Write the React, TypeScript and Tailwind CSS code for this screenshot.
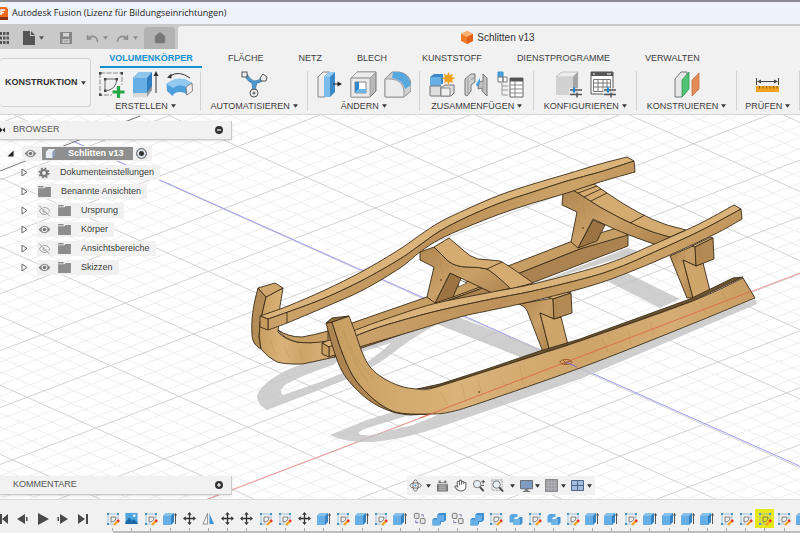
import type { ReactNode } from 'react'
import { EyeOff, Hand, House, Redo, Undo } from 'lucide-react'

function Caret({ className = '' }: { className?: string }) {
  return (
    <svg viewBox="0 0 6 4" className={`w-[5px] h-1 shrink-0 ${className}`} fill="currentColor" aria-hidden="true">
      <path d="M0 0h6L3 4z" />
    </svg>
  )
}

/* ---------- small icons ---------- */

function Cube() {
  return (
    <svg viewBox="0 0 14 14" className="w-[14px] h-[14px]">
      <path d="M0 4l3-3h8v9l-3 3H1q-1 0-1-1z" fill="#3583c4" />
      <path d="M0 4l3-3h8L8 4z" fill="#86c1ec" />
      <path d="M0 4h8v9H1q-1 0-1-1z" fill="#66aee6" />
      <path d="M12.500 12V2M11.500 3.500l1-2 1 2" stroke="#444" strokeWidth=".9" fill="none" />
    </svg>
  )
}

function Sketch() {
  return (
    <svg viewBox="0 0 14 14" className="w-[14px] h-[14px]" fill="none">
      <path d="M2 2h10M2 2v10M12 2v5M2 12h5" stroke="#8db5d2" strokeWidth=".8" />
      <path d="M5 5h5q0 5-5 5z" stroke="#666" strokeWidth=".8" />
      <path d="M1 1h2v2H1zM11 1h2v2h-2zM1 11h2v2H1z" fill="#4a94c8" />
      <path d="M8 13l4-4" stroke="#f0a224" strokeWidth="2.400" />
      <path d="M11.500 9.500l1.500-1.500" stroke="#e0342c" strokeWidth="2.600" />
    </svg>
  )
}

function Move() {
  return (
    <svg viewBox="0 0 14 14" className="w-[13px] h-[13px]" fill="#333">
      <path d="M7 0l2.400 3H4.600zM7 14l2.400-3H4.600zM0 7l3-2.400v4.800zM14 7l-3-2.400v4.800z" />
      <path d="M6.300 2.500h1.400v9H6.300zM2.500 6.300h9v1.400h-9z" />
    </svg>
  )
}

function Mirror() {
  return (
    <svg viewBox="0 0 14 14" className="w-[13px] h-[13px]">
      <path d="M6 1.500V13H1z" fill="#f7f7f7" stroke="#777" strokeWidth=".8" />
      <path d="M8 1.500V13h5z" fill="#3f97d8" />
    </svg>
  )
}

function Picture() {
  return (
    <svg viewBox="0 0 14 14" className="w-[13px] h-[13px]">
      <rect x=".5" y="1" width="13" height="12" fill="#4da4e0" />
      <path d="M.500 11l4-5 3 3.500 2-2 4 4V13H.500z" fill="#1c69a6" />
      <circle cx="10" cy="4" r="1.300" fill="#fff" />
    </svg>
  )
}

function Copies() {
  return (
    <svg viewBox="0 0 14 14" className="w-[13px] h-[13px]" fill="#e3e3e3" stroke="#666" strokeWidth=".9">
      <rect x="1.500" y="1.500" width="5" height="5.500" rx="1" />
      <rect x="8" y="7" width="5" height="5.500" rx="1" />
      <path d="M3 9v2.500h3M9 3h2v2" fill="none" stroke="#55a" />
    </svg>
  )
}

function Combine() {
  return (
    <svg viewBox="0 0 14 14" className="w-[14px] h-[14px]">
      <path d="M5 3l2-2h7v7l-2 2H9v2l-1.500 1.500H.500V7.500L2 6h3z" fill="#3d8fd0" />
      <path d="M5 3h7v6H8v4H.500V7.500H5z" fill="#66aee6" />
    </svg>
  )
}

function Split() {
  return (
    <svg viewBox="0 0 14 14" className="w-[14px] h-[14px]">
      <path d="M.500 4l2-2h6v7l-2 1.500h-6z" fill="#5aa7e2" />
      <path d="M4.500 7l2-2h7v6l-2 2h-7z" fill="#3f93d3" />
      <path d="M4.500 7H11v6H4.500z" fill="#6fb5e8" />
      <path d="M4.500 7l2-2h4L9 7z" fill="#eef6fc" />
    </svg>
  )
}

function Folder() {
  return (
    <svg viewBox="0 0 14 12" className="w-[13px] h-[11px] shrink-0" fill="#8d8d8d">
      <path d="M0 0h6v1.500H0zM0 2.500h7L8 1h6v11H0z" />
    </svg>
  )
}

function Gear() {
  return (
    <svg viewBox="0 0 12 12" className="w-3 h-3 shrink-0" fill="none" stroke="#777">
      <circle cx="6" cy="6" r="3" strokeWidth="2.200" />
      <circle cx="6" cy="6" r="4.700" strokeWidth="1.800" strokeDasharray="1.850 1.840" />
    </svg>
  )
}

function Eye() {
  return (
    <svg viewBox="0 0 14 10" className="w-[13px] h-[9px] shrink-0">
      <path d="M.500 5Q7-3.500 13.500 5 7 13.500.500 5z" fill="#888" />
      <circle cx="7" cy="5" r="3.100" fill="#f0f0f0" />
      <circle cx="7" cy="5" r="1.900" fill="#777" />
    </svg>
  )
}

/* ---------- ribbon icons ---------- */

const ribbonSvg = 'w-[27px] h-[27px]'

function CreateSketchIcon() {
  return (
    <svg viewBox="0 0 27 27" className={ribbonSvg} fill="none">
      <path d="M2 2h22v12M2 2v22h12" stroke="#888" strokeDasharray="5 1.500" />
      <path d="M7 8h12q-1 11-12 12z" stroke="#666" />
      <path d="M1 1h2.500v2.500H1zM22.500 1H25v2.500h-2.500zM1 22.500h2.500V25H1zM6 7h2.500v2.500H6zM17.500 7H20v2.500h-2.500zM6 18.500h2.500V21H6z" fill="#444" />
      <path d="M20.500 15v12M14.500 21h12" stroke="#25a947" strokeWidth="3.200" />
    </svg>
  )
}

function ExtrudeIcon() {
  return (
    <svg viewBox="0 0 27 27" className={ribbonSvg}>
      <path d="M1 25V7l6-6h13v18l-6 7H2z" fill="#2f7dbd" />
      <path d="M1 7l6-6h13l-5 6z" fill="#8fc6ee" />
      <path d="M1 7h14v15H1z" fill="#66aee6" />
      <path d="M1 22h14v4H2q-1 0-1-1z" fill="#d9d9d9" />
      <path d="M15 22l5-7v4l-5 7z" fill="#9c9c9c" />
      <path d="M24 22V4" stroke="#333" />
      <path d="M24 0l2.500 5h-5z" fill="#333" />
    </svg>
  )
}

function RevolveIcon() {
  return (
    <svg viewBox="0 0 27 27" className={ribbonSvg}>
      <path d="M.500 13Q13 3 26 12l.500 8-6 4q-1-3-7-3-5 0-7 4L1 20z" fill="#4f9fdb" />
      <path d="M.500 13Q13 3 26 12l-6 4q-7-4-13 1z" fill="#93c9ef" />
      <path d="M20 16l6-4 .500 8-5.500 4z" fill="#eee" stroke="#777" strokeWidth=".8" />
      <path d="M4 5Q13-1 24 7" fill="none" stroke="#333" />
      <path d="M1 6.500L5.500 2.500v5z" fill="#333" />
    </svg>
  )
}

function AutomateIcon() {
  return (
    <svg viewBox="0 0 27 27" className={ribbonSvg}>
      <path d="M3 4q4 7 8 8 1 5 0 9h4q-1-5 1-9 4 0 7-4l-2-2q-3 4-7.500 4Q9 9 6 3z" fill="#4c9ad0" stroke="#38719c" strokeWidth=".7" />
      <rect x="1" y="1" width="5" height="5" fill="#eee" stroke="#555" />
      <path d="M19 7l3-4 4 3-1 4h-5z" fill="#eee" stroke="#555" />
      <circle cx="13" cy="22" r="4" fill="#eee" stroke="#555" />
      <circle cx="13" cy="22" r="1.600" fill="#777" />
    </svg>
  )
}

function PressPullIcon() {
  return (
    <svg viewBox="0 0 27 27" className={ribbonSvg}>
      <path d="M2 6l5-5h7v20l-5 5H2z" fill="#ececec" stroke="#888" />
      <path d="M8 6l5-5h6v20l-5 5H8z" fill="#3a88c6" />
      <path d="M8 6h6v20H8z" fill="#7bbcec" />
      <path d="M8 6l5-5h6l-5 5z" fill="#94cbf2" />
      <path d="M17 13h5" stroke="#222" />
      <path d="M26 13l-4.500-2.500v5z" fill="#222" />
    </svg>
  )
}

function ShellIcon() {
  return (
    <svg viewBox="0 0 27 27" className={ribbonSvg}>
      <path d="M1 7l6-6h19v19l-6 6H1z" fill="#b8b8b8" stroke="#777" />
      <path d="M1 7h19v19H1zM1 7l6-6h19l-6 6z" fill="#ebebeb" stroke="#999" strokeWidth=".8" />
      <path d="M5 11h11v11H5z" fill="#fff" stroke="#888" />
      <path d="M5 11h4v7l-4 4z" fill="#2f86c8" />
      <path d="M5 22l4-4h7v4z" fill="#6db5e8" />
    </svg>
  )
}

function FilletIcon() {
  return (
    <svg viewBox="0 0 27 27" className={ribbonSvg}>
      <path d="M1 8l7-7h7q11 2 12 12v7l-7 6H1z" fill="#cfcfcf" stroke="#888" />
      <path d="M9 1h6q10 2 12 13l-6 4Q19 9 8 7z" fill="#58a8e0" />
      <path d="M1 8h6q12 1 13 12v6H1z" fill="#ececec" stroke="#999" />
    </svg>
  )
}

function NewComponentIcon() {
  return (
    <svg viewBox="0 0 27 27" className={ribbonSvg}>
      <path d="M1 6l4-3h9v10H1z" fill="#3b89c6" />
      <path d="M1 6h11v9H1z" fill="#67b0e6" />
      <path d="M1 15h11v10H2q-1 0-1-1zM12 17l4-3h9v8l-3 3H12z" fill="#ddd" stroke="#777" />
      <path d="M12 17h9v8h-9z" fill="#efefef" stroke="#888" />
      <path d="M19.500 1l1.300 3.300 3.300-1.600-1.200 3.400 3.600 1.200-3.500 1.400 1.200 3.400-3.400-1.400-1.300 3.300-1.400-3.300-3.300 1.400 1.200-3.400-3.500-1.400 3.500-1.200-1.200-3.400 3.300 1.600z" fill="#f2a01f" />
    </svg>
  )
}

function JointIcon() {
  return (
    <svg viewBox="0 0 27 27" className={ribbonSvg}>
      <path d="M2 8l6-5h4v8l-4 3v6l-4 5-2-1z" fill="#cfcfcf" stroke="#777" />
      <path d="M5 7v16M8 9l4-3" fill="none" stroke="#999" />
      <path d="M16 11l4-1V3l4 4v18l-5-5v-3l-4 1z" fill="#c2c2c2" stroke="#777" />
      <path d="M20 10v10" stroke="#999" />
      <path d="M13 13l4-6v5l-3 4z" fill="#4ba0dc" />
    </svg>
  )
}

function TableIcon() {
  return (
    <svg viewBox="0 0 27 27" className={ribbonSvg}>
      <path d="M1 1h5v5H1z" fill="#4ba0dc" stroke="#39c" />
      <path d="M1 6h5v5H1zM6 6h4v5H6z" fill="#fff" stroke="#777" />
      <path d="M5 12v12M5 15h6M5 19h6M5 24h6" stroke="#999" fill="none" />
      <path d="M13 7h13v19H13z" fill="#fff" stroke="#666" />
      <path d="M13 7h13v3.500H13z" fill="#555" />
      <path d="M13 14h13M13 18h13M13 22h13M18 10v16" stroke="#888" />
    </svg>
  )
}

function Sliders() {
  return (
    <>
      <path d="M14 17h13v9H14z" fill="#f0f0f0" opacity=".7" />
      <path d="M15 19h12M15 23.500h12" stroke="#555" strokeWidth="1.400" />
      <path d="M19 16.500v5" stroke="#1388dc" strokeWidth="2" />
      <path d="M22 21.500v5" stroke="#555" strokeWidth="1.500" />
    </>
  )
}

function ConfigureIcon() {
  return (
    <svg viewBox="0 0 27 27" className={ribbonSvg}>
      <path d="M1 6l6-5h16v19l-5 4H2q-1 0-1-1z" fill="#a4a4a4" />
      <path d="M1 6l6-5h16l-5 5z" fill="#ededed" stroke="#aaa" strokeWidth=".6" />
      <path d="M1 6h17v18H2q-1 0-1-1z" fill="#d2d2d2" />
      <Sliders />
    </svg>
  )
}

function ConfigureTableIcon() {
  return (
    <svg viewBox="0 0 27 27" className={ribbonSvg}>
      <path d="M2 1h22v22H2z" fill="#fff" stroke="#555" />
      <path d="M2 1h22v4H2z" fill="#555" />
      <path d="M4 3h2M18 3h4" stroke="#fff" />
      <path d="M4.500 8.500h17v12h-17zM4.500 12h17M4.500 16h17M9 8.500v12M14 8.500v12M18 8.500v12" fill="none" stroke="#777" />
      <Sliders />
    </svg>
  )
}

function PlaneIcon() {
  return (
    <svg viewBox="0 0 27 27" className={ribbonSvg}>
      <path d="M2 8l6-7h6v19l-5 6H2z" fill="#e6e6e6" stroke="#777" />
      <path d="M9 9l7-8v17l-7 8z" fill="#4fc274" stroke="#2f9a52" strokeWidth=".8" />
      <path d="M19 9l7-7v16l-7 7z" fill="#e58b58" stroke="#c96e3d" strokeWidth=".8" />
    </svg>
  )
}

function MeasureIcon() {
  return (
    <svg viewBox="0 0 27 27" className={ribbonSvg}>
      <path d="M2.500 7v7M24.500 7v7M4 10.500h19" stroke="#444" />
      <path d="M3 10.500l4-2v4zM24 10.500l-4-2v4z" fill="#444" />
      <path d="M2 15h23v6H2z" fill="#f2a01f" />
      <path d="M5.500 15v2.500M9 15v2.500M12.500 15v2.500M16 15v2.500M19.500 15v2.500M23 15v2.500" stroke="#8a5a10" />
    </svg>
  )
}

/* ---------- canvas ---------- */

type Pt = [number, number]

// one major grid cell, projected: u runs up-right, v runs down-right
const at = (a: number, b: number): Pt => [375 + 83.3 * a + 68.6 * b, 208 - 31.7 * a + 30.8 * b]

function gridPath(major: boolean) {
  let d = ''
  for (let i = -60; i <= 60; i++) {
    if ((i % 5 === 0) !== major) continue
    const [x1, y1] = at(-14, i / 5)
    const [x2, y2] = at(14, i / 5)
    const [x3, y3] = at(i / 5, -14)
    const [x4, y4] = at(i / 5, 14)
    d += `M${x1} ${y1}L${x2} ${y2}M${x3} ${y3}L${x4} ${y4}`
  }
  return d
}

// smooth curve through the points (Catmull-Rom turned into beziers)
function through(pts: Pt[]) {
  let d = ''
  for (let i = 0; i < pts.length - 1; i++) {
    const p0 = pts[i - 1] ?? pts[i]
    const p1 = pts[i]
    const p2 = pts[i + 1]
    const p3 = pts[i + 2] ?? p2
    d += `C${p1[0] + (p2[0] - p0[0]) / 6} ${p1[1] + (p2[1] - p0[1]) / 6} ${p2[0] - (p3[0] - p1[0]) / 6} ${p2[1] - (p3[1] - p1[1]) / 6} ${p2[0]} ${p2[1]}`
  }
  return d
}

// closed face between two curves that run the same way
function face(a: Pt[], b: Pt[]) {
  const back = [...b].reverse()
  return `M${a[0][0]} ${a[0][1]}${through(a)}L${back[0][0]} ${back[0][1]}${through(back)}Z`
}

const farRail: Record<string, Pt[]> = {
  top: [[260, 316], [288, 306], [325, 290], [363, 271], [400, 249], [420, 235], [440, 222], [467, 209], [500, 195], [533, 184], [567, 174], [600, 164], [627, 157]],
  mid: [[268, 319], [288, 312], [325, 298], [363, 280], [400, 259], [420, 245], [440, 231], [467, 217], [500, 203], [533, 192], [567, 181], [600, 172], [634, 161]],
  low: [[268, 330], [287, 323], [325, 307], [363, 290], [400, 268], [420, 252], [440, 239], [467, 227], [500, 214], [533, 203], [567, 193], [600, 182], [635, 172]],
}

const nearRail: Record<string, Pt[]> = {
  top: [[322, 343], [353, 331], [383, 320], [433, 304], [487, 293], [533, 284], [590, 269], [620, 259], [650, 246], [697, 225], [734, 205]],
  mid: [[329, 347], [353, 337], [383, 326], [433, 312], [487, 300], [533, 291], [590, 277], [620, 267], [650, 254], [700, 231], [741, 209]],
  low: [[329, 357], [353, 349], [383, 340], [410, 332], [460, 317], [487, 311], [533, 301], [590, 286], [627, 273], [670, 255], [717, 233], [742, 219]],
}

const nearRunner: Record<string, Pt[]> = {
  outer: [[326, 323], [333, 348], [342, 371], [355, 388], [373, 403], [393, 412], [410, 415]],
  ridge: [[332, 322], [342, 352], [353, 376], [367, 393], [383, 406], [400, 413], [430, 414], [450, 412], [483, 402], [580, 368], [677, 330], [755, 298]],
  inner: [[349, 316], [355, 332], [362, 352], [370, 367], [383, 378], [400, 386], [417, 389], [433, 388], [487, 371], [540, 354], [580, 341], [690, 302], [743, 278]],
}

function Canvas() {
  return (
    <svg
      viewBox="0 115 800 384"
      preserveAspectRatio="xMidYMid slice"
      className="absolute inset-0 w-full h-full"
      role="img"
      aria-label="Schlitten v13"
    >
      <defs>
        <linearGradient id="side" x1="0" y1="0" x2="1" y2=".3">
          <stop offset="0" stopColor="#c0965c" />
          <stop offset=".3" stopColor="#cba26a" />
          <stop offset=".55" stopColor="#bc925a" />
          <stop offset=".8" stopColor="#cba268" />
          <stop offset="1" stopColor="#bc9058" />
        </linearGradient>
        <linearGradient id="runner" x1="0" y1="0" x2="1" y2="0">
          <stop offset="0" stopColor="#c79e62" />
          <stop offset=".12" stopColor="#d0a76b" />
          <stop offset=".3" stopColor="#dab37a" />
          <stop offset=".6" stopColor="#cda46a" />
          <stop offset=".8" stopColor="#d5ad74" />
          <stop offset="1" stopColor="#c69c62" />
        </linearGradient>
        <linearGradient id="leg" x1="0" y1="0" x2="1" y2="1">
          <stop offset="0" stopColor="#b08750" />
          <stop offset=".5" stopColor="#c9a068" />
          <stop offset="1" stopColor="#a97f4a" />
        </linearGradient>
      </defs>

      <path d={gridPath(false)} stroke="#efefef" fill="none" />
      <path d={gridPath(true)} stroke="#d2d2d2" fill="none" />
      <path d="M0 171L140 116" stroke="#777" />
      <path d="M75 142L880 502" stroke="#9292ee" strokeWidth=".9" />
      <path d="M200 502L800 273" stroke="#f09a9a" />

      {/* ground shadows */}
      <g fill="#c4c4c4" opacity=".8">
        <path d="M257 396Q259 388 273 378 285 370 297 366L325 356 345 356 333 365Q300 376 285 385 278 391 283 395L323 381 350 370 367 362Q388 348 400 333L440 322Q420 334 403 345 385 360 370 368L345 380 267 410Q257 404 257 396z" />
        <path d="M359 347L383 339 410 333 440 324 400 340 362 352z" />
        <path d="M330 435L367 420 393 412 410 415 367 428Q357 432 359 434 365 437 380 433L413 425 440 414 580 368 755 299 757 304 580 379 440 427Q405 439 373 442 345 443 330 435z" />
        <path d="M434 323L458 317 546 351 530 361z" />
        <path d="M607 281L627 273 680 299 660 308z" />
        <path d="M532 285L628 248 640 252 600 264z" />
      </g>

      <g stroke="#3b2c18" strokeWidth=".9" strokeLinejoin="round">
        {/* far runner */}
        <path d="M325 332L352 323 427 297 508 266 570 242 620 227 628 236 580 249 480 289 355 334 322 343z" fill="#c69d62" />
        <path d="M322 343L355 334 480 289 580 249 628 235 628 246 532 283 400 335 335 357z" fill="#ab8350" />
        <path d="M258 288C253 306 251 320 252 334 252 341 255 346 261 349L259 337 260 323 266 297z" fill="#b48c56" />
        <path d="M266 297L283 288 280 306 278 332Q284 339 297 342 310 344 324 341L335 357 312 362Q302 365 293 364 284 364 277 362 267 357 261 349 258 336 260 323z" fill="url(#runner)" />
        <path d="M278 330Q288 337 302 337 314 335 328 331V341Q310 344 297 342 284 339 278 330z" fill="#c79e64" />
        <path d="M258 288L275 283 283 288 266 297z" fill="#d0a86e" />

        {/* rear crossbar with its far leg */}
        <path d="M593 220L605 225 597 241 578 248z" fill="#9c7444" />
        <path d="M563 193L573 190 600 207Q625 222 650 231L670 237 657 245Q630 236 610 227L593 219 578 248 571 242 577 212 562 205z" fill="url(#leg)" />
        <path d="M573 190L594 184 607 193Q640 216 667 225L686 230 670 237Q640 230 600 207z" fill="#d4ab70" />
        <path d="M591 201L607 193M584 197L601 189M578 193L597 186M630 223L645 215" fill="none" />

        {/* front crossbar with its far leg */}
        <path d="M450 273L461 278 453 297 435 303z" fill="#9c7444" />
        <path d="M460 280L467 283 458 287z" fill="#fff" strokeWidth=".6" />
        <path d="M453 297L480 287" />
        <path d="M420 252L434 247 448 261Q456 267 467 267 480 267 487 269 493 272 511 288L492 293 480 287 450 273 435 303 427 297 434 267 420 260z" fill="url(#leg)" />
        <path d="M434 247L449 238 463 250Q470 257 478 259 490 260 500 261 507 264 533 283L511 289Q493 272 487 269 480 267 467 267 456 267 448 261z" fill="#d4ab70" />
        <path d="M487 269L502 262" />

        {/* far seat rail */}
        <path d={face(farRail.top, farRail.mid)} fill="#dab37a" />
        <path d={face(farRail.mid, farRail.low)} fill="url(#side)" />
        <path d="M260 316L268 319 268 330 260 327z" fill="#c59b60" />
        <path d="M287 312V323" />

        {/* near legs */}
        <path d="M519 304L553 298 554 319 540 313 550 352 543 352 528 313Q526 307 519 304z" fill="url(#leg)" />
        <path d="M540 313L554 319 561 317 568 345 550 352z" fill="#cea56a" />
        <path d="M545 296L568 292 571 293 553 299z" fill="#d8b078" />
        <path d="M553 299L571 293 572 313 554 319z" fill="#b38a54" />
        <path d="M670 256L695 245 696 266 683 260 693 298 687 298z" fill="url(#leg)" />
        <path d="M683 260L696 266 703 263 710 291 693 298z" fill="#cea56a" />
        <path d="M692 246L711 237 713 238 695 247z" fill="#d8b078" />
        <path d="M695 247L713 238 714 259 696 266z" fill="#b38a54" />

        {/* near seat rail */}
        <path d={face(nearRail.top, nearRail.mid)} fill="#dab37a" />
        <path d={face(nearRail.mid, nearRail.low)} fill="url(#side)" />
        <path d="M322 343L329 347 329 357 322 354z" fill="#c59b60" />

        {/* near runner */}
        <path d={face(nearRunner.outer, nearRunner.ridge.slice(0, 7))} fill="#ae8450" />
        <path d="M417 389L440 384 487 369 540 351 580 339 690 299 733 278 743 277 690 302 580 341 487 371 433 388z" fill="#6e5430" />
        <path d={face(nearRunner.inner, nearRunner.ridge)} fill="url(#runner)" />
        <path d="M326 323L332 318 349 316 332 322z" fill="#8f6b3c" />
      </g>

      {/* wood grain */}
      <g stroke="#a87a42" strokeWidth=".6" opacity=".4" fill="none">
        <path d="M343 330Q352 362 368 382M350 345Q356 362 374 378M440 392L448 405M462 384L466 402M478 380L482 394M500 376L506 388M520 366L523 384M602 338L608 352M628 330L631 346M650 322L654 336M700 302L706 314M722 292L728 304" />
        <path d="M270 340L276 356M284 346L290 358M300 348L302 360M440 234L450 231M500 208L520 201M380 279L388 275M440 314L450 311M500 302L516 299M620 270L628 267M556 304L558 314M700 247L702 260M583 205L586 220M440 262L444 278" />
      </g>
      <g fill="#6f4c22">
        <circle cx="479" cy="392" r=".9" />
        <circle cx="583" cy="228" r=".9" />
        <circle cx="441" cy="280" r=".9" />
      </g>

      <path d="M420 418L752 291" stroke="#e0694a" strokeWidth=".9" />
      <g fill="none" stroke="#a0562e">
        <ellipse cx="566" cy="362" rx="6" ry="2.500" />
        <path d="M563 360L568 365M562 364L571 361" />
      </g>
      <path d="M566 362L577 367" stroke="#7a6ad0" />
    </svg>
  )
}

/* ---------- panels ---------- */

function QuickBar() {
  return (
    <div className="w-[178px] bg-[#c9c9c9] flex items-end text-[#6f6f6f]">
      <div className="flex items-center h-[22px] flex-1 gap-1">
        <button aria-label="Daten" className="w-[9px] overflow-hidden">
          <svg viewBox="0 0 9 12" className="w-[9px] h-3" fill="#555">
            <path d="M0 0h2v3H0zM3 0h2.500v3H3zM6.500 0H9v3H6.500zM0 4.500h2v3H0zM3 4.500h2.500v3H3zM6.500 4.500H9v3H6.500zM0 9h2v3H0zM3 9h2.500v3H3zM6.500 9H9v3H6.500z" />
          </svg>
        </button>
        <button aria-label="Datei" className="flex items-center gap-1 ml-[10px] text-[#555]">
          <svg viewBox="0 0 12 14" className="w-3 h-[14px]" fill="currentColor">
            <path d="M0 0h7v5h5v9H0zM8 0l4 4H8z" />
          </svg>
          <Caret />
        </button>
        <button aria-label="Speichern" className="ml-3 text-[#868686]">
          <svg viewBox="0 0 12 12" className="w-3 h-3">
            <path d="M0 0h12v12H0z" fill="currentColor" />
            <path d="M3 1h6v3.500H3zM2.500 7h7v4h-7z" fill="#d4d4d4" />
            <path d="M3.500 8.300h5M3.500 9.800h5" stroke="currentColor" strokeWidth=".7" />
          </svg>
        </button>
        <button aria-label="Rückgängig" className="flex items-center gap-1 ml-[10px] text-[#8a8a8a]">
          <Undo className="w-[13px] h-[13px]" strokeWidth={3} />
          <Caret />
        </button>
        <button aria-label="Wiederholen" className="flex items-center gap-1 ml-1 text-[#8a8a8a]">
          <Redo className="w-[13px] h-[13px]" strokeWidth={3} />
          <Caret />
        </button>
      </div>
      <button aria-label="Start" className="w-[31px] h-[22px] mr-[3px] rounded-t bg-[#b2b2b2] flex items-center justify-center">
        <House className="w-3 h-3 text-[#777] fill-[#777]" strokeWidth={2.5} />
      </button>
    </div>
  )
}

function Group({ label, className, children }: { label: string; className: string; children: ReactNode }) {
  return (
    <div className={`min-w-0 border-r border-[#d3d3d3] h-10 flex flex-col items-center justify-between ${className}`}>
      <div className="flex gap-[7px] h-[27px]">{children}</div>
      <button className="flex items-center gap-[3px] leading-[10px] whitespace-nowrap">
        {label}
        <Caret />
      </button>
    </div>
  )
}

function IconButton({ label, children }: { label: string; children: ReactNode }) {
  return <button aria-label={label}>{children}</button>
}

const tabs = ['FLÄCHE', 'NETZ', 'BLECH', 'KUNSTSTOFF', 'DIENSTPROGRAMME', 'VERWALTEN']

function Ribbon() {
  return (
    <div className="h-[66px] bg-[#f1f1f1] border-b border-[#d6d6d6] flex text-[9px] text-[#3d3d3d]">
      <div className="relative w-[91px] h-[49px] mt-[9px] shrink-0">
        <select
          aria-label="Arbeitsbereich"
          className="appearance-none w-full h-full rounded border border-l-0 border-[#d2d2d2] bg-[#f4f4f4] pl-[5px] font-bold text-[#333]"
        >
          <option>KONSTRUKTION</option>
        </select>
        <Caret className="absolute right-[5px] top-[23px] pointer-events-none" />
      </div>
      <div className="flex-1 min-w-0">
        <nav className="flex h-[19px] items-stretch gap-[35px] pl-[9px] whitespace-nowrap">
          <a href="#volumen" className="w-[102px] -mr-[9px] shrink-0 text-center font-bold leading-[18px] text-[#1690d2] border-b-2 border-[#1690d2]">
            VOLUMENKÖRPER
          </a>
          {tabs.map((t) => (
            <a key={t} href={`#${t.toLowerCase()}`} className="leading-[18px]">
              {t}
            </a>
          ))}
        </nav>
        <div className="flex pt-[3px]">
          <Group label="ERSTELLEN" className="flex-[110]">
            <IconButton label="Skizze erstellen"><CreateSketchIcon /></IconButton>
            <IconButton label="Extrusion"><ExtrudeIcon /></IconButton>
            <IconButton label="Drehen"><RevolveIcon /></IconButton>
          </Group>
          <Group label="AUTOMATISIEREN" className="flex-[107]">
            <IconButton label="Automatisierte Modellierung"><AutomateIcon /></IconButton>
          </Group>
          <Group label="ÄNDERN" className="flex-[112]">
            <IconButton label="Drücken/Ziehen"><PressPullIcon /></IconButton>
            <IconButton label="Schale"><ShellIcon /></IconButton>
            <IconButton label="Abrundung"><FilletIcon /></IconButton>
          </Group>
          <Group label="ZUSAMMENFÜGEN" className="flex-[114]">
            <IconButton label="Neue Komponente"><NewComponentIcon /></IconButton>
            <IconButton label="Verbindung"><JointIcon /></IconButton>
            <IconButton label="Stückliste"><TableIcon /></IconButton>
          </Group>
          <Group label="KONFIGURIEREN" className="flex-[103]">
            <IconButton label="Konfiguration"><ConfigureIcon /></IconButton>
            <IconButton label="Konfigurationstabelle"><ConfigureTableIcon /></IconButton>
          </Group>
          <Group label="KONSTRUIEREN" className="flex-[99]">
            <IconButton label="Versatzebene"><PlaneIcon /></IconButton>
          </Group>
          <Group label="PRÜFEN" className="flex-[63]">
            <IconButton label="Messen"><MeasureIcon /></IconButton>
          </Group>
        </div>
      </div>
    </div>
  )
}

const rows = [
  { label: 'Dokumenteinstellungen', icon: 'gear' },
  { label: 'Benannte Ansichten', icon: 'folder' },
  { label: 'Ursprung', icon: 'hidden' },
  { label: 'Körper', icon: 'shown' },
  { label: 'Ansichtsbereiche', icon: 'hidden' },
  { label: 'Skizzen', icon: 'shown' },
]

function Tree() {
  return (
    <ul className="mt-1 text-[9px] text-[#3c3c3c]">
      <li className="flex items-center h-[19px] pl-[7px]">
        <button aria-label="Zuklappen" className="w-[15px]">
          <svg viewBox="0 0 8 8" className="w-[7px] h-[7px]">
            <path d="M7.500.500v7h-7z" fill="#222" />
          </svg>
        </button>
        <div className="flex items-center h-[15px] bg-[#f1f1f1] pl-[2px] pr-[5px]">
          <button aria-label="Sichtbarkeit">
            <Eye />
          </button>
          <div className="flex items-center w-[91px] h-[13px] ml-[5px] bg-[#8f8f8f] text-white font-bold">
            <svg viewBox="0 0 12 12" className="w-[11px] h-[11px] ml-[3px] mr-3">
              <path d="M1 4l3-3h7v7l-3 3H1z" fill="#8fa0b8" />
              <path d="M1 4h7v7H1zM1 4l3-3h7L8 4z" fill="#e8edf5" />
            </svg>
            Schlitten v13
          </div>
          <input
            type="radio"
            name="active"
            defaultChecked
            aria-label="Schlitten v13 aktivieren"
            className="appearance-none w-[11px] h-[11px] ml-[3px] rounded-full border border-[#777] bg-[#333] shadow-[inset_0_0_0_2px_#dce4ee]"
          />
        </div>
      </li>
      {rows.map((r) => (
        <li key={r.label} className="flex items-center h-[19px] pl-[21px]">
          <button aria-label={`${r.label} aufklappen`} className="w-4">
            <svg viewBox="0 0 7 9" className="w-[7px] h-[9px]">
              <path d="M1 1l5 3.500L1 8z" fill="#fff" stroke="#666" />
            </svg>
          </button>
          <div className="flex items-center h-[15px] bg-[#f1f1f1] pl-px">
            {r.icon === 'gear' && <Gear />}
            {r.icon === 'folder' && <Folder />}
            {(r.icon === 'hidden' || r.icon === 'shown') && (
              <>
                <button aria-label={`${r.label} Sichtbarkeit`} className="mr-[7px]">
                  {r.icon === 'shown' ? <Eye /> : <EyeOff className="w-[13px] h-3 text-[#8d8d8d]" strokeWidth={1.6} />}
                </button>
                <Folder />
              </>
            )}
            <span className="pl-[10px] pr-[6px]">{r.label}</span>
          </div>
        </li>
      ))}
    </ul>
  )
}

function PanelBar({ title, sign, children }: { title: string; sign: string; children?: ReactNode }) {
  return (
    <div className="flex items-center w-[232px] h-[19px] bg-[#f1f1f1] border-b border-r border-[#cacaca] shadow-sm text-[9px] text-[#555]">
      <span className="w-[13px]">{children}</span>
      <span className="flex-1">{title}</span>
      <button aria-label={title} className="mr-2">
        <svg viewBox="0 0 8 8" className="w-2 h-2">
          <circle cx="4" cy="4" r="4" fill="#333" />
          <path d={sign} stroke="#fff" strokeWidth="1.200" />
        </svg>
      </button>
    </div>
  )
}

function NavBar() {
  return (
    <div className="flex items-center justify-between w-[188px] h-[19px] pl-[2px] pr-[3px] bg-[#f1f1f1] text-[#333]">
      <button aria-label="Orbit" className="flex items-center gap-1">
        <svg viewBox="0 0 14 14" className="w-[13px] h-[13px]" fill="none" stroke="#666">
          <ellipse cx="7" cy="7" rx="6" ry="2.800" />
          <ellipse cx="7" cy="7" rx="2.800" ry="6" />
          <circle cx="7" cy="7" r="1" fill="#3a8fd0" stroke="none" />
        </svg>
        <Caret />
      </button>
      <button aria-label="Ansicht">
        <svg viewBox="0 0 14 12" className="w-[13px] h-3" fill="#777">
          <path d="M3 0h2v2h4V0h2v2l2 1H1l2-1zM1 4h12v8H1z" />
          <path d="M3 6h8M3 8h8M3 10h8" stroke="#ddd" strokeWidth=".8" />
        </svg>
      </button>
      <button aria-label="Pan">
        <Hand className="w-[13px] h-[13px] text-[#666] fill-white" strokeWidth={2} />
      </button>
      <button aria-label="Zoom">
        <svg viewBox="0 0 14 14" className="w-[13px] h-[13px]" fill="none">
          <circle cx="5.500" cy="5.500" r="4" fill="#e4eef4" stroke="#777" />
          <path d="M8.500 8.500l4 4.500" stroke="#444" strokeWidth="2" />
          <path d="M10 3h4M12 1v4M10 7h3" stroke="#444" />
        </svg>
      </button>
      <button aria-label="Zoomfenster" className="flex items-center gap-[6px]">
        <svg viewBox="0 0 14 14" className="w-[13px] h-[13px]" fill="none">
          <path d="M1 1h11v11H1z" stroke="#999" strokeDasharray="2 1" />
          <circle cx="6" cy="6" r="4" fill="#e4eef4" stroke="#777" />
          <path d="M9 9l4 4.500" stroke="#444" strokeWidth="2" />
        </svg>
        <Caret />
      </button>
      <button aria-label="Anzeige" className="flex items-center gap-[2px]">
        <svg viewBox="0 0 14 13" className="w-[13px] h-3">
          <path d="M.500.500h13v9H.500z" fill="#7c9cc4" stroke="#666" />
          <path d="M5 10h4v2h2v1H3v-1h2z" fill="#777" />
        </svg>
        <Caret />
      </button>
      <button aria-label="Raster" className="flex items-center gap-[3px]">
        <svg viewBox="0 0 13 13" className="w-[13px] h-[13px]">
          <path d="M.500.500h12v12H.500z" fill="#9c9ca2" stroke="#8a8a8a" />
          <path d="M3.500 1v11M6.500 1v11M9.500 1v11M1 3.500h11M1 6.500h11M1 9.500h11" stroke="#b9b9c0" strokeWidth=".6" />
        </svg>
        <Caret />
      </button>
      <button aria-label="Ansichtsfenster" className="flex items-center gap-[3px]">
        <svg viewBox="0 0 13 11" className="w-[13px] h-[11px]">
          <path d="M.500.500h12v10H.500z" fill="#a3bbdd" stroke="#4f6688" />
          <path d="M6.500 0v11M0 5.500h13" stroke="#4f6688" />
        </svg>
        <Caret />
      </button>
    </div>
  )
}

const features: Record<string, [string, () => ReactNode]> = {
  s: ['Skizze', () => <Sketch />],
  i: ['Bild', () => <Picture />],
  e: ['Extrusion', () => <Cube />],
  m: ['Verschieben', () => <Move />],
  r: ['Spiegeln', () => <Mirror />],
  c: ['Kopie', () => <Copies />],
  k: ['Kombinieren', () => <Combine />],
  t: ['Trennen', () => <Split />],
}
const timeline = 'sisemrmmssmeseseckckststseeseeeesssse'.split('')
const active = 34

function Timeline() {
  return (
    <footer className="h-[34px] flex overflow-hidden bg-[#f1f1f1] border-t border-[#dcdcdc]">
      <div className="flex items-center w-[103px] h-[38px] shrink-0 gap-[7px] text-[#4a4a4a]">
        {[
          ['Anfang', 'M0 1h2v10H0zM8 1v10L2 6z'],
          ['Zurück', 'M8 1v10L0 6zM9 4h1.500v4H9z'],
          ['Wiedergabe', 'M1 0v12l11-6z'],
          ['Vor', 'M3 1v10l8-5zM.500 4H2v4H.500z'],
          ['Ende', 'M1 1v10l7-5zM9 1h2v10H9z'],
        ].map(([label, d]) => (
          <button key={label} aria-label={label} className="first:w-[10px] w-[13px] overflow-hidden">
            <svg viewBox="0 0 13 12" className="w-[13px] h-3" fill="currentColor">
              <path d={d} />
            </svg>
          </button>
        ))}
      </div>
      <ol className="flex flex-1 -mr-[13px] pt-[9px]">
        {timeline.map((k, i) => (
          <li key={i} className="flex-1 flex flex-col items-center">
            <button
              aria-label={features[k][0]}
              className={`w-[19px] h-[19px] flex items-center justify-center ${i === active ? 'bg-[#e6e81c]' : ''}`}
            >
              {features[k][1]()}
            </button>
            <span className="w-px h-[3px] bg-[#aaa]" />
            <span className={`h-[2px] bg-[#bdbdbd] ${i === 0 ? 'w-1/2 self-end' : 'w-full'}`} />
          </li>
        ))}
      </ol>
    </footer>
  )
}

export default function App() {
  return (
    <div className="h-screen flex flex-col overflow-hidden bg-white font-['Liberation_Sans',Arial,sans-serif]">
      <header className="h-6 shrink-0 flex items-center gap-1 border-t-2 border-[#8b8b95] bg-[#eef2fa]">
        <svg viewBox="0 0 8 13" className="w-2 h-[13px]">
          <path d="M0 0h6l2 2v11H0z" fill="#f0681c" />
          <path d="M0 10h8v3H0z" fill="#8a3210" />
          <path d="M1 8V3h4M1 5.500h3" stroke="#fff" strokeWidth="1.400" fill="none" />
        </svg>
        <h1 className="text-[9px] text-[#222] font-['Open_Sans',sans-serif]">Autodesk Fusion (Lizenz für Bildungseinrichtungen)</h1>
      </header>
      <div className="h-[25px] shrink-0 flex border-t-2 border-[#c9c9c9] bg-[#c9c9c9]">
        <QuickBar />
        <div className="flex-1 flex items-center justify-center gap-1 pl-[18px] rounded-tl bg-[#f1f1f1] text-[10px] text-[#333]">
          <svg viewBox="0 0 12 13" className="w-3 h-[13px]">
            <path d="M6 0l6 3v7l-6 3-6-3V3z" fill="#f07a28" />
            <path d="M6 0l6 3-6 3-6-3z" fill="#f9ae72" />
            <path d="M12 3v7l-6 3V6z" fill="#e2601a" />
          </svg>
          Schlitten v13
        </div>
      </div>
      <Ribbon />
      <main className="relative flex-1 min-h-0 overflow-hidden">
        <Canvas />
        <div className="relative h-full flex flex-col justify-between pt-[6px] pb-1">
          <section>
            <PanelBar title="BROWSER" sign="M2 4h4">
              <svg viewBox="0 0 6 6" className="w-[5px] h-[6px]" fill="#222">
                <path d="M0 0l3 3 3-3v6L3 3 0 6z" />
              </svg>
            </PanelBar>
            <Tree />
          </section>
          <div className="flex gap-[175px]">
            <PanelBar title="KOMMENTARE" sign="M2 4h4M4 2v4" />
            <NavBar />
          </div>
        </div>
      </main>
      <Timeline />
    </div>
  )
}
